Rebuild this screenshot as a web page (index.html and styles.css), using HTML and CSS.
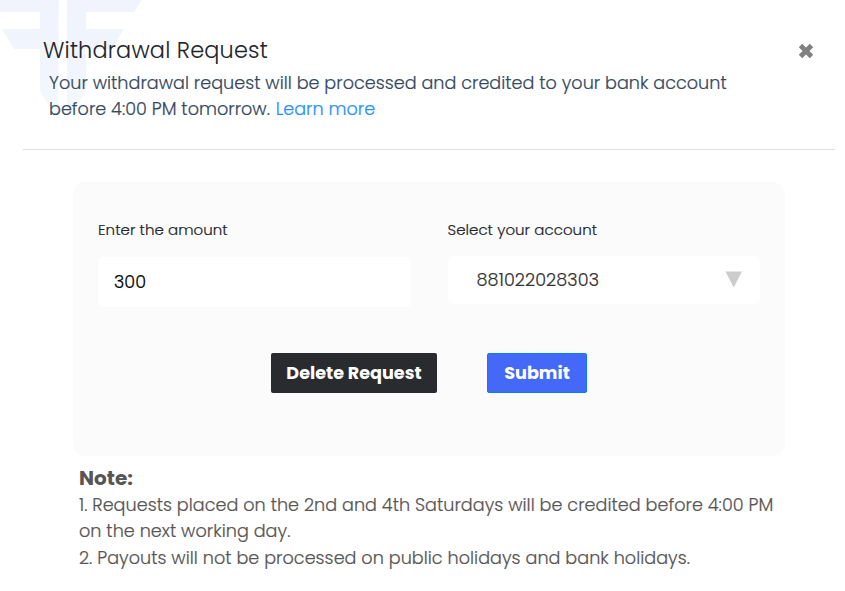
FILE: index.html
```html
<!DOCTYPE html>
<html lang="en">
<head>
<meta charset="utf-8">
<title>Withdrawal Request</title>
<link rel="stylesheet" href="styles.css">
</head>
<body>
<svg class="watermark" width="145" height="125" viewBox="0 0 145 125" aria-hidden="true">
  <defs><linearGradient id="fade" x1="0" y1="0" x2="0" y2="125" gradientUnits="userSpaceOnUse"><stop offset="0" stop-color="#f0f3fc"/><stop offset=".6" stop-color="#f1f6fe"/><stop offset="1" stop-color="#f5faff"/></linearGradient></defs>
  <path fill="url(#fade)" d="M0 0H58.500V121L40 91V49H14L2 29H40V12H0Z"/>
  <path fill="url(#fade)" d="M67 0H142L134 12H86V29H124L112 49H86V91L67 121Z"/>
</svg>
<main class="modal">
  <header class="head">
    <div class="title-row">
      <h1 class="title">Withdrawal Request</h1>
      <button class="close" aria-label="Close"><svg width="18" height="18" viewBox="0 0 18 18"><path d="M3.500 3.500L14.500 14.500M14.500 3.500L3.500 14.500" stroke="#808080" stroke-width="4.800"/></svg></button>
    </div>
    <p class="intro">Your withdrawal request will be processed and credited to your bank account<br>before 4:00 PM tomorrow. <a class="link">Learn more</a></p>
  </header>
  <section class="card">
    <div class="fields">
      <div class="field">
        <span class="label">Enter the amount</span>
        <div class="box amount"><span>300</span></div>
      </div>
      <div class="field">
        <span class="label">Select your account</span>
        <div class="box account"><span>881022028303</span><svg width="18" height="18" viewBox="0 0 18 18"><path fill="#ccc" d="M.5 .5H17L8.750 16.500Z"/></svg></div>
      </div>
    </div>
    <div class="actions">
      <button class="btn dark">Delete Request</button>
      <button class="btn primary">Submit</button>
    </div>
  </section>
  <section class="notes">
    <h2 class="note-title">Note:</h2>
    <p class="note">1. Requests placed on the 2nd and 4th Saturdays will be credited before 4:00 PM<br>on the next working day.</p>
    <p class="note">2. Payouts will not be processed on public holidays and bank holidays.</p>
  </section>
</main>
</body>
</html>
```
FILE: styles.css
```css
* { box-sizing: border-box; }
body { margin: 0; width: 845px; height: 591px; overflow: hidden; background: #fff; font-family: Poppins, Inter, sans-serif; }
h1, h2, p { margin: 0; }
button { font: inherit; border: 0; padding: 0; }
.watermark { position: absolute; left: 0; top: 0; }
.modal { position: relative; padding: 35px 10px 0 23px; }
.head { height: 115px; border-bottom: 1px solid #dee0e2; }
.title-row { display: flex; justify-content: space-between; height: 35px; padding: 0 20px 0 20px; }
.title { font-size: 22.4px; letter-spacing: .2px; font-weight: 300; line-height: 31px; color: #212529; white-space: nowrap; }
.close { width: 18px; height: 18px; margin-top: 7px; background: none; }
.close svg { display: block; }
.title { -webkit-text-stroke: .1px currentColor; }
.intro, .label, .box, .note { -webkit-text-stroke: .2px currentColor; }
.intro { padding-left: 26px; font-size: 17.6px; letter-spacing: .02px; line-height: 26px; color: #34495e; font-weight: 300; white-space: nowrap; }
.link { margin-left: 1px; color: #1e90ff; }
.card { width: 712px; height: 274px; margin: 32px 0 0 50px; padding: 37px 25px 0; border-radius: 13px; background: #fbfbfb; }
.fields { display: flex; gap: 37px; height: 134px; }
.field { width: 313px; }
.label { display: block; height: 37px; line-height: 22px; font-size: 15px; letter-spacing: .05px; font-weight: 300; color: #212529; white-space: nowrap; }
.box { display: flex; align-items: center; border-radius: 5px; background: #fff; font-size: 17.6px; font-weight: 300; }
.amount { height: 50px; margin-top: 1px; padding-left: 16px; color: #000; }
.account { height: 48px; padding: 0 17px 0 29px; justify-content: space-between; color: #333; letter-spacing: .1px; }
.actions { display: flex; gap: 50px; padding-left: 173px; }
.btn { height: 40px; border-radius: 2px; color: #fff; font-size: 17.6px; font-weight: 700; white-space: nowrap; }
.dark { width: 166px; background: #2a2b2f; }
.primary { width: 100px; background: #4468f7; border: 1px solid #087cff; }
.notes { padding: 9px 0 0 56px; color: #575555; }
.note-title { font-size: 20px; line-height: 27px; font-weight: 700; }
.note { font-size: 17.6px; letter-spacing: .035px; line-height: 26.4px; font-weight: 300; white-space: nowrap; }
```
